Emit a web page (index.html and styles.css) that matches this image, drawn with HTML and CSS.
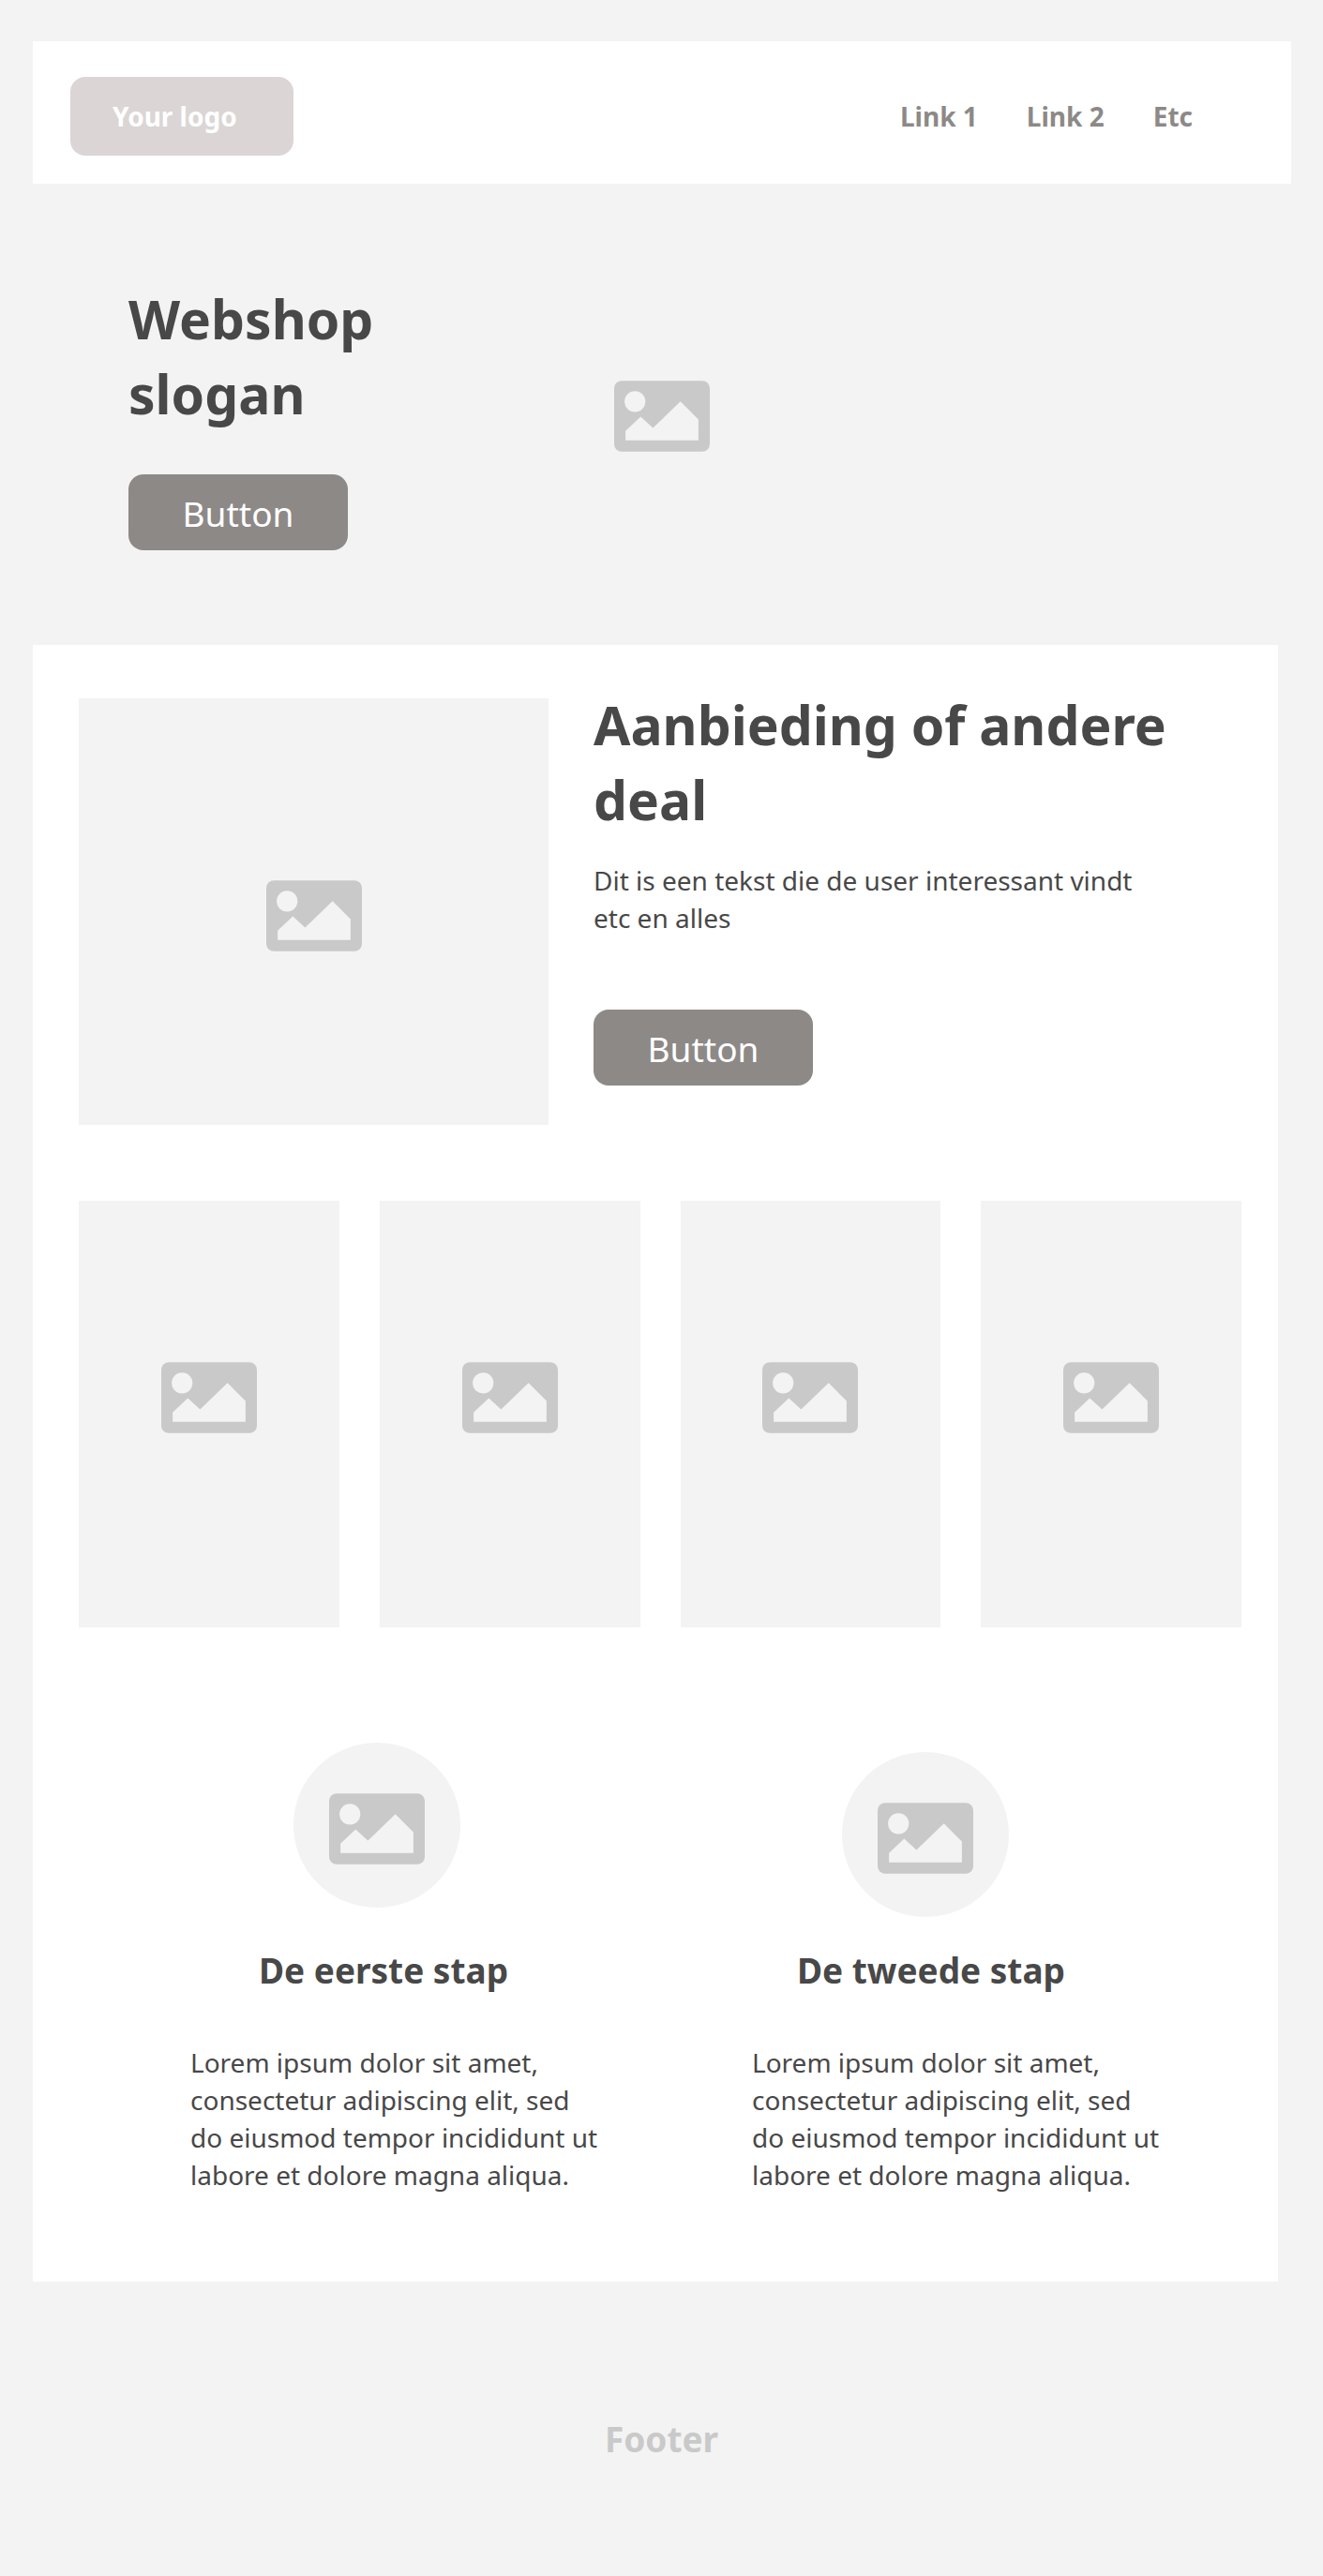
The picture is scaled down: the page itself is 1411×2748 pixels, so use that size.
FILE: index.html
```html
<!DOCTYPE html>
<html lang="nl">
<head>
  <meta charset="utf-8">
  <meta name="viewport" content="width=device-width, initial-scale=1">
  <title>Webshop</title>
  <link rel="stylesheet" href="styles.css">
</head>
<body>
  <svg class="sprite" aria-hidden="true">
    <symbol id="picture" viewBox="0 0 101 75">
      <rect class="picture-frame" width="101" height="75" rx="8"/>
      <circle class="picture-cutout" cx="22" cy="22" r="11"/>
      <path class="picture-cutout" d="M12 63V53L28 38L41 50L70 22L89 41V63Z"/>
    </symbol>
  </svg>

  <header class="site-header">
    <a class="logo" href="#">Your logo</a>
    <nav class="nav">
      <a href="#">Link 1</a>
      <a href="#">Link 2</a>
      <a href="#">Etc</a>
    </nav>
  </header>

  <section class="hero">
    <div class="hero-text">
      <h1 class="heading">Webshop slogan</h1>
      <button class="button" type="button">Button</button>
    </div>
    <svg class="icon" aria-hidden="true"><use href="#picture"/></svg>
  </section>

  <main class="panel">
    <section class="deal">
      <div class="placeholder deal-image">
        <svg class="icon" aria-hidden="true"><use href="#picture"/></svg>
      </div>
      <div class="deal-text">
        <h2 class="heading">Aanbieding of andere deal</h2>
        <p class="text">Dit is een tekst die de user interessant vindt etc en alles</p>
        <button class="button" type="button">Button</button>
      </div>
    </section>

    <section class="cards">
      <div class="placeholder card"><svg class="icon" aria-hidden="true"><use href="#picture"/></svg></div>
      <div class="placeholder card"><svg class="icon" aria-hidden="true"><use href="#picture"/></svg></div>
      <div class="placeholder card"><svg class="icon" aria-hidden="true"><use href="#picture"/></svg></div>
      <div class="placeholder card"><svg class="icon" aria-hidden="true"><use href="#picture"/></svg></div>
    </section>

    <section class="steps">
      <article class="step step-first">
        <div class="step-image"><svg class="icon" aria-hidden="true"><use href="#picture"/></svg></div>
        <h3 class="step-title">De eerste stap</h3>
        <p class="text">Lorem ipsum dolor sit amet, consectetur adipiscing elit, sed do eiusmod tempor incididunt ut labore et dolore magna aliqua.</p>
      </article>
      <article class="step step-second">
        <div class="step-image"><svg class="icon" aria-hidden="true"><use href="#picture"/></svg></div>
        <h3 class="step-title">De tweede stap</h3>
        <p class="text">Lorem ipsum dolor sit amet, consectetur adipiscing elit, sed do eiusmod tempor incididunt ut labore et dolore magna aliqua.</p>
      </article>
    </section>
  </main>

  <footer class="site-footer">Footer</footer>
</body>
</html>
```
FILE: styles.css
```css
:root {
  --surface: #f3f3f3;
  --panel: #ffffff;
  --ink: #484848;
  --accent: #8d8987;
  --logo: #dbd5d5;
  --muted: #c9c9c9;
}

* {
  box-sizing: border-box;
}

body {
  margin: 0;
  padding-top: 44px;
  background: var(--surface);
  color: var(--ink);
  font-family: "Noto Sans", "Segoe UI", sans-serif;
  font-size: 28px;
  line-height: 40px;
}

h1,
h2,
h3,
p {
  margin: 0;
}

.sprite {
  display: none;
}

.picture-frame {
  fill: var(--muted);
}

.picture-cutout {
  fill: var(--surface);
}

.icon {
  display: block;
  flex: none;
  width: 102px;
  height: 76px;
}

.heading {
  font-size: 57px;
  font-weight: 700;
  line-height: 80px;
}

.button {
  width: 234px;
  height: 81px;
  padding: 3px 0 0;
  border: 0;
  border-radius: 16px;
  background: var(--accent);
  color: #ffffff;
  font: inherit;
  font-size: 37px;
  cursor: pointer;
}

/* Header */

.site-header {
  display: flex;
  justify-content: space-between;
  margin: 0 34px 0 35px;
  padding: 38px 105px 30px 40px;
  background: var(--panel);
}

.logo {
  display: flex;
  align-items: center;
  width: 238px;
  height: 84px;
  padding-left: 45px;
  border-radius: 16px;
  background: var(--logo);
  color: #ffffff;
  font-weight: 700;
  text-decoration: none;
}

.nav {
  display: flex;
  align-items: center;
  gap: 52px;
}

.nav a {
  color: var(--accent);
  font-weight: 700;
  text-decoration: none;
}

/* Hero */

.hero {
  display: grid;
  grid-template-columns: 1fr auto 1fr;
  align-items: center;
  padding: 104px 137px 101px;
}

.hero-text {
  display: flex;
  flex-direction: column;
  align-items: flex-start;
  gap: 46px;
  max-width: 300px;
}

/* Main panel */

.panel {
  margin: 0 48px 0 35px;
  padding: 45px 39px 94px 49px;
  background: var(--panel);
}

.placeholder {
  display: flex;
  align-items: center;
  justify-content: center;
  height: 455px;
  background: var(--surface);
}

.deal {
  display: grid;
  grid-template-columns: 501fr 691fr;
  column-gap: 48px;
}

.deal-image {
  margin-top: 12px;
  padding-top: 8px;
}

.deal-text .text {
  max-width: 600px;
  margin: 26px 0 78px;
}

.cards {
  display: grid;
  grid-template-columns: repeat(4, 1fr);
  gap: 43px;
  margin-top: 81px;
}

.card {
  padding-bottom: 36px;
}

/* Steps */

.steps {
  display: grid;
  grid-template-columns: 1fr 1fr;
  align-items: end;
  gap: 77px;
  margin-top: 123px;
  padding-left: 119px;
}

.step-image {
  display: flex;
  align-items: center;
  justify-content: center;
  width: 178px;
  height: 176px;
  padding-top: 8px;
  border-radius: 50%;
  background: var(--surface);
}

.step-first .step-image {
  margin: 0 0 42px 110px;
}

.step-second .step-image {
  margin: 0 0 32px 96px;
}

.step-title {
  font-size: 37px;
  font-weight: 700;
  line-height: 50px;
}

.step-first .step-title {
  padding-left: 73px;
}

.step-second .step-title {
  padding-left: 48px;
}

.step .text {
  max-width: 438px;
  margin-top: 53px;
}

/* Footer */

.site-footer {
  padding: 143px 0 121px;
  color: var(--muted);
  font-size: 37px;
  font-weight: 700;
  line-height: 50px;
  text-align: center;
}
```
